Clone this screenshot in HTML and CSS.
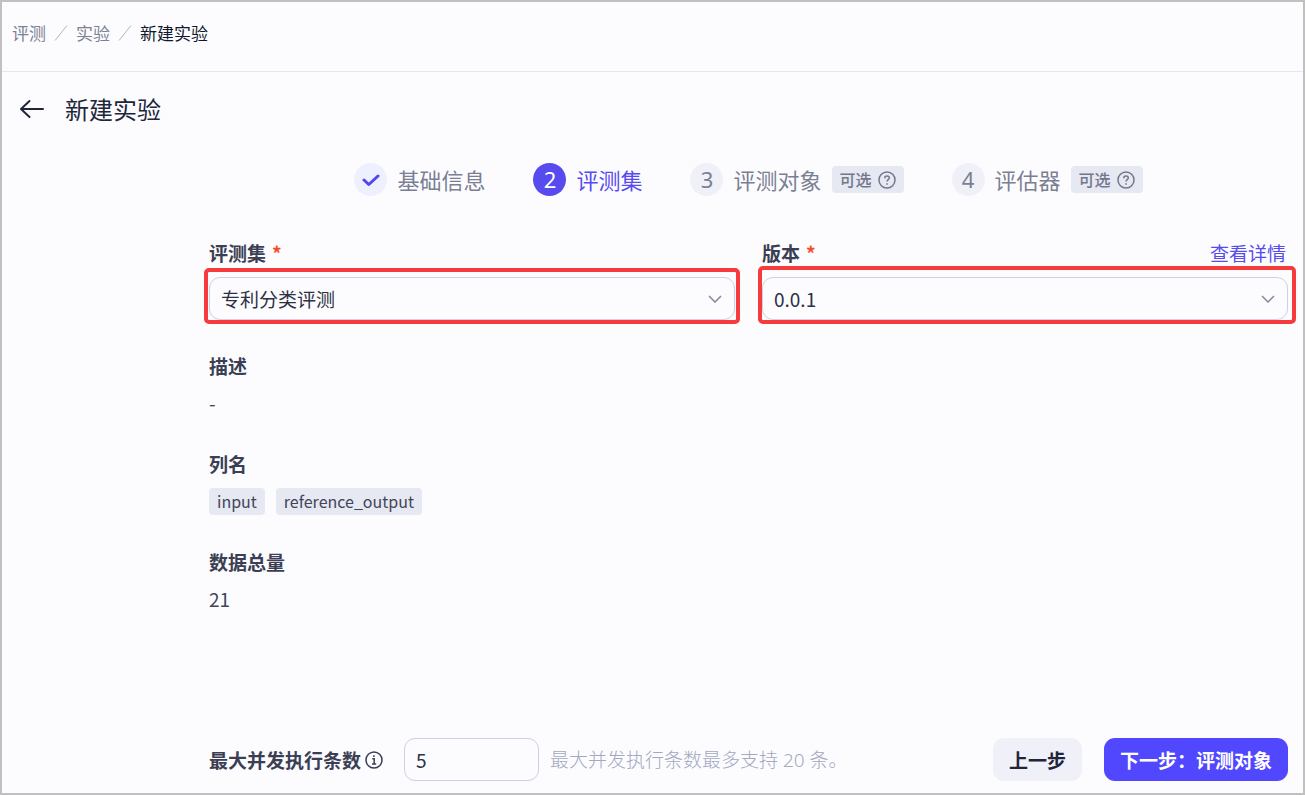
FILE: index.html
```html
<!DOCTYPE html>
<html lang="zh-CN">
<head>
<meta charset="utf-8">
<title>新建实验</title>
<link rel="stylesheet" href="styles.css">
</head>
<body>
<div class="page">
  <nav class="breadcrumb" aria-label="breadcrumb">
    <a class="crumb" href="#">评测</a>
    <svg class="crumb-sep" viewBox="0 0 14 18"><path d="M1 16.500L13 1.500"/></svg>
    <a class="crumb" href="#">实验</a>
    <svg class="crumb-sep" viewBox="0 0 14 18"><path d="M1 16.500L13 1.500"/></svg>
    <span class="crumb crumb-current">新建实验</span>
  </nav>

  <header class="title-bar">
    <button class="back" type="button" aria-label="返回">
      <svg viewBox="0 0 26 22"><path d="M10.500 3L2 11L10.500 19M2.500 11H24"/></svg>
    </button>
    <h1 class="title">新建实验</h1>
  </header>

  <form class="form">
    <ol class="steps">
      <li class="step step-done">
        <span class="step-mark"><svg class="check" viewBox="0 0 18 14"><path d="M2 7L6.800 11.500L16 3"/></svg></span>
        <span>基础信息</span>
      </li>
      <li class="step step-active"><span class="step-mark">2</span><span>评测集</span></li>
      <li class="step">
        <span class="step-mark">3</span><span>评测对象</span>
        <span class="optional">可选
          <svg class="help" viewBox="0 0 18 18"><circle cx="9" cy="9" r="8"/><path d="M6.800 7.200C6.800 4.300 11.300 4.500 11.300 7C11.300 8.600 9 8.600 9 10.500"/><path d="M9 12.200V13.700"/></svg>
        </span>
      </li>
      <li class="step">
        <span class="step-mark">4</span><span>评估器</span>
        <span class="optional">可选
          <svg class="help" viewBox="0 0 18 18"><circle cx="9" cy="9" r="8"/><path d="M6.800 7.200C6.800 4.300 11.300 4.500 11.300 7C11.300 8.600 9 8.600 9 10.500"/><path d="M9 12.200V13.700"/></svg>
        </span>
      </li>
    </ol>

    <div class="fields">
      <div class="field">
        <div class="field-head">
          <label class="label" for="dataset">评测集</label><span class="required">*</span>
        </div>
        <div class="select-wrap">
          <select class="control" id="dataset"><option>专利分类评测</option></select>
          <svg class="chevron" viewBox="0 0 14 8"><path d="M1 1L7 7L13 1"/></svg>
          <span class="highlight"></span>
        </div>
      </div>
      <div class="field">
        <div class="field-head">
          <label class="label" for="version">版本</label><span class="required">*</span>
          <a class="detail-link" href="#">查看详情</a>
        </div>
        <div class="select-wrap">
          <select class="control" id="version"><option>0.0.1</option></select>
          <svg class="chevron" viewBox="0 0 14 8"><path d="M1 1L7 7L13 1"/></svg>
          <span class="highlight highlight-wide"></span>
        </div>
      </div>
    </div>

    <dl class="info">
      <div class="info-item"><dt class="label">描述</dt><dd class="value">-</dd></div>
      <div class="info-item"><dt class="label">列名</dt><dd class="value"><span class="tag">input</span><span class="tag">reference_output</span></dd></div>
      <div class="info-item"><dt class="label">数据总量</dt><dd class="value">21</dd></div>
    </dl>

    <footer class="footer">
      <label class="label" for="concurrency">最大并发执行条数</label>
      <svg class="info-icon" viewBox="0 0 18 18"><circle cx="9" cy="9" r="8"/><path d="M7.300 7.800H9.200V13M7 13H11.200"/><path d="M8.900 4.300V5.900"/></svg>
      <input class="control concurrency" id="concurrency" type="text" inputmode="numeric" value="5">
      <span class="hint">最大并发执行条数最多支持 20 条。</span>
      <div class="actions">
        <button class="btn" type="button">上一步</button>
        <button class="btn btn-primary" type="submit">下一步：评测对象</button>
      </div>
    </footer>
  </form>
</div>
</body>
</html>
```

FILE: styles.css
```css
* {
  box-sizing: border-box;
}

body {
  margin: 0;
  font-family: "Noto Sans CJK SC", sans-serif;
  font-size: 19px;
  line-height: 28px;
  color: #41455a;
  background: #fcfcff;
}

button,
input,
select {
  font: inherit;
}

svg {
  flex: none;
  fill: none;
  stroke: currentColor;
}

.page {
  display: flex;
  flex-direction: column;
  min-height: 100vh;
  border: 2px solid #c0c0c0;
}

.breadcrumb {
  display: flex;
  align-items: center;
  gap: 8px;
  height: 70px;
  padding: 0 10px 7px;
  border-bottom: 1px solid #e6e6ec;
  font-size: 17px;
}

.crumb {
  color: #7d8194;
  text-decoration: none;
}

.crumb-current {
  color: #12172b;
}

.crumb-sep {
  width: 14px;
  height: 18px;
  color: #b3b6c8;
}

.title-bar {
  display: flex;
  align-items: center;
  gap: 20px;
  padding: 19px 17px 0;
}

.back {
  display: flex;
  padding: 0;
  border: 0;
  background: none;
  color: #20253a;
}

.back svg {
  width: 26px;
  height: 22px;
  stroke-width: 2;
  stroke-linecap: round;
  stroke-linejoin: round;
}

.title {
  margin: 0;
  font-size: 24px;
  font-weight: 400;
  line-height: 36px;
  color: #20253a;
}

.form {
  display: flex;
  flex: 1;
  flex-direction: column;
  padding: 36px 15px 12px 207px;
}

.steps {
  display: flex;
  justify-content: center;
  gap: 48px;
  margin: 0;
  padding: 0;
  list-style: none;
  font-size: 22px;
  line-height: 33px;
  color: #7b7f93;
}

.step {
  display: flex;
  align-items: center;
  gap: 10px;
  white-space: nowrap;
}

.step-mark {
  display: flex;
  align-items: center;
  justify-content: center;
  width: 33px;
  height: 33px;
  border-radius: 50%;
  background: #f0f0f9;
  font-family: "Noto Sans", sans-serif;
}

.step-done .step-mark {
  background: #eef0ff;
  color: #5147ee;
}

.check {
  width: 18px;
  height: 14px;
  stroke-width: 3;
  stroke-linecap: round;
  stroke-linejoin: round;
}

.step-active {
  color: #574bef;
}

.step-active .step-mark {
  background: #574bef;
  color: #fff;
}

.optional {
  display: flex;
  align-items: center;
  gap: 6px;
  padding: 0 8px;
  border-radius: 4px;
  background: #e6e8f2;
  font-size: 16px;
  font-weight: 500;
  line-height: 27px;
  color: #73778e;
}

.help,
.info-icon {
  width: 18px;
  height: 18px;
  stroke-width: 1.500;
}

.fields {
  display: grid;
  grid-template-columns: 1fr 1fr;
  gap: 27px;
  margin-top: 43px;
}

.field-head {
  display: flex;
  gap: 6px;
  margin-bottom: 10px;
}

.label {
  font-weight: 700;
  color: #3b3f53;
}

.required {
  font-weight: 700;
  color: #fa4b28;
}

.detail-link {
  margin-left: auto;
  margin-right: 2px;
  color: #574bef;
  text-decoration: none;
}

.select-wrap {
  position: relative;
}

.control {
  display: block;
  width: 100%;
  height: 43px;
  padding: 0 11px;
  border: 1px solid #cfcfe4;
  border-radius: 11px;
  background: transparent;
  color: #2d3144;
  appearance: none;
}

.chevron {
  position: absolute;
  top: 18px;
  right: 13px;
  width: 14px;
  height: 8px;
  color: #85879a;
  stroke-width: 1.500;
  pointer-events: none;
}

.highlight {
  position: absolute;
  inset: -9px -5px -4px;
  border: 4px solid #f53b3b;
  border-radius: 5px;
  pointer-events: none;
}

.highlight-wide {
  inset: -11px -8px -4px -4px;
}

.info {
  display: flex;
  flex-direction: column;
  gap: 32px;
  margin: 32px 0 0;
}

.info-item {
  display: flex;
  flex-direction: column;
  gap: 8px;
}

.value {
  display: flex;
  align-items: center;
  gap: 11px;
  height: 30px;
  margin: 0;
}

.tag {
  padding: 0 8px;
  border-radius: 4px;
  background: #e6e8f2;
  font-size: 16px;
  line-height: 27px;
}

.footer {
  display: flex;
  align-items: center;
  margin-top: auto;
}

.info-icon {
  margin: 0 21px 0 4px;
  color: #3b3f53;
}

.concurrency {
  width: 135px;
}

.hint {
  margin-left: 11px;
  font-family: "Noto Sans", "Noto Sans CJK SC", sans-serif;
  font-weight: 300;
  color: #a3a8bf;
}

.actions {
  display: flex;
  gap: 22px;
  margin-left: auto;
}

.btn {
  height: 43px;
  padding: 0 16px;
  border: 0;
  border-radius: 11px;
  background: #f0f0f9;
  font-weight: 700;
  color: #20253a;
}

.btn-primary {
  background: #5147ff;
  color: #fff;
}
```
